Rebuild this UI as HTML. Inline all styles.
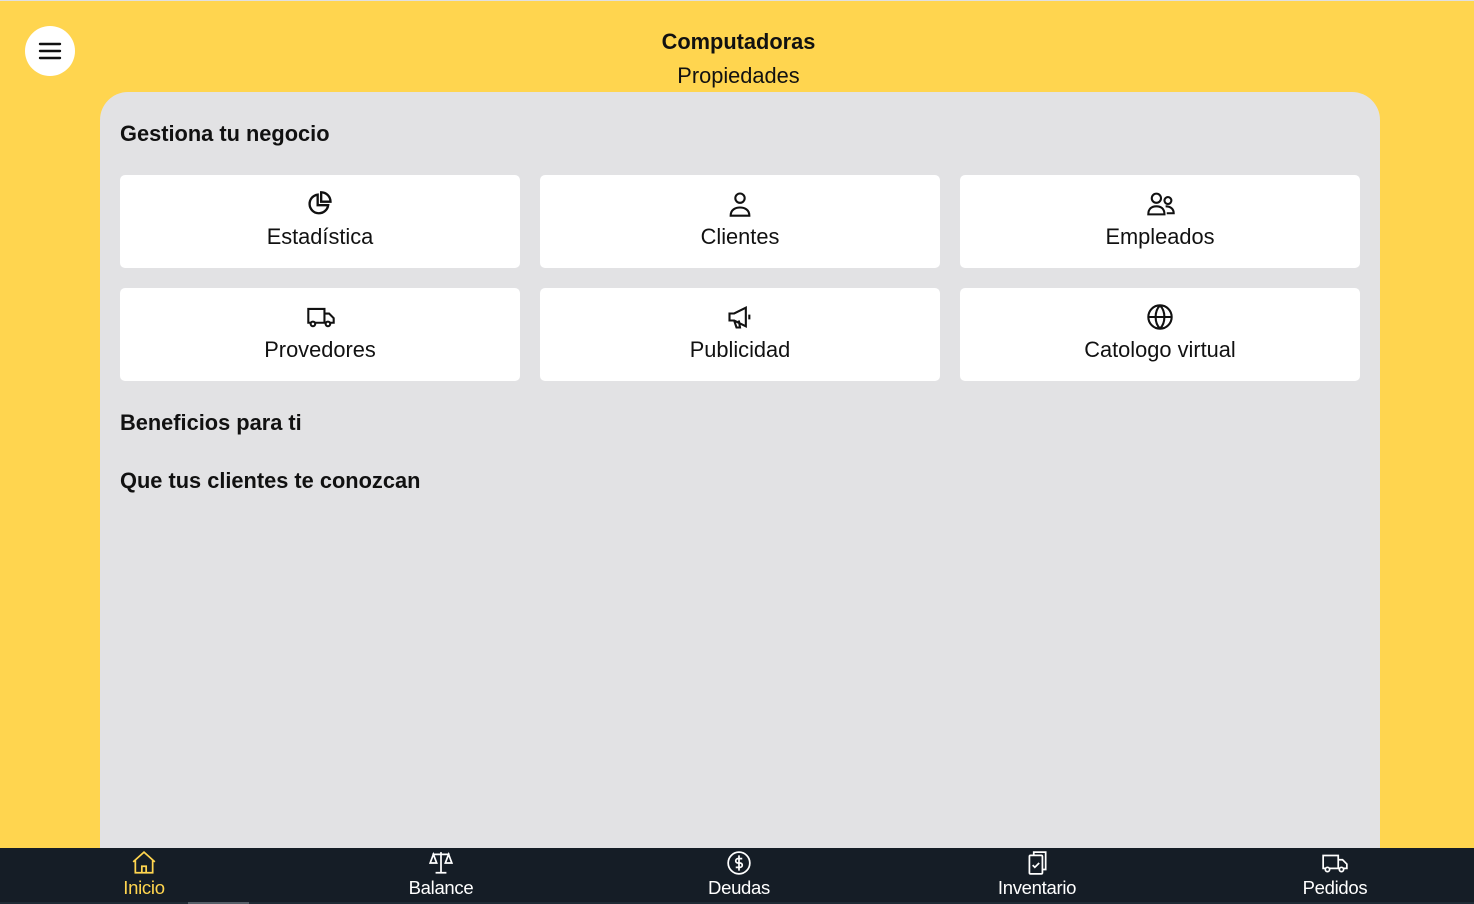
<!DOCTYPE html>
<html><head><meta charset="utf-8"><style>
*{margin:0;padding:0;box-sizing:border-box}
body{width:1474px;height:904px;background:#ffd54f;font-family:"Liberation Sans",Arial,sans-serif;position:relative;overflow:hidden;color:#111}
.top{position:absolute;top:0;left:0;width:1474px;height:1px;background:#e0e0e0}
.menu{position:absolute;left:25px;top:26px;width:50px;height:50px;border-radius:50%;background:#fff;display:flex;align-items:center;justify-content:center}
.t1{position:absolute;top:29px;width:100%;text-align:center;font-weight:bold;font-size:21.8px;padding-left:3px}
.t2{position:absolute;top:63px;width:100%;text-align:center;font-size:21.8px;padding-left:3px}
.panel{position:absolute;left:100px;top:92px;width:1280px;height:760px;background:#e2e2e4;border-radius:28px 28px 0 0}
h2{position:absolute;left:20px;font-size:21.8px;font-weight:bold}
.card{position:absolute;width:400px;height:93px;background:#fff;border-radius:5px;text-align:center;font-size:21.8px}
.card svg{position:absolute;left:186px;top:15px}
.card span{position:absolute;left:0;right:0;top:49px}
.bar{position:absolute;left:0;top:848px;width:1474px;height:56px;background:#151d26}
.tab{position:absolute;top:0;width:200px;text-align:center;color:#fff;font-size:18.5px}
.tab svg{display:block;margin:2px auto 0}
.tab span{display:block;margin-top:1px;letter-spacing:-0.3px}
</style></head><body>
<div class="top"></div>
<div class="menu"><svg width="24" height="20" viewBox="0 0 24 20"><path d="M2 3h20M2 10h20M2 17h20" stroke="#111" stroke-width="2.4" stroke-linecap="round"/></svg></div>
<div class="t1">Computadoras</div>
<div class="t2">Propiedades</div>
<div class="panel">
<h2 style="top:29px">Gestiona tu negocio</h2>
<div class="card" style="left:20px;top:83px"><svg width="28" height="28" viewBox="0 0 24 24" fill="none" stroke="#111" stroke-width="2"><path d="M10 4a8 8 0 1 0 9 9h-9z"/><path d="M13 2a8 8 0 0 1 8 8h-8z"/></svg><span>Estadística</span></div>
<div class="card" style="left:440px;top:83px"><svg width="28" height="28" viewBox="0 0 24 24" fill="none" stroke="#111" stroke-width="1.8"><circle cx="12" cy="7" r="4"/><path d="M4 22c0-5 4-7 8-7s8 2 8 7z"/></svg><span>Clientes</span></div>
<div class="card" style="left:860px;top:83px"><svg width="30" height="28" viewBox="0 0 26 24" fill="none" stroke="#111" stroke-width="1.8"><circle cx="9" cy="7" r="4"/><circle cx="19" cy="9" r="3"/><path d="M2 21c0-5 3-7 7-7s7 2 7 7z"/><path d="M17 14c4 0 7 2 7 6h-6"/></svg><span>Empleados</span></div>
<div class="card" style="left:20px;top:196px"><svg width="30" height="28" viewBox="0 0 26 24" fill="none" stroke="#111" stroke-width="1.8"><path d="M2 5h14v12H2zM16 9h4l4 4v4h-8"/><circle cx="6" cy="18" r="2" fill="#fff"/><circle cx="19" cy="18" r="2" fill="#fff"/></svg><span>Provedores</span></div>
<div class="card" style="left:440px;top:196px"><svg width="28" height="28" viewBox="0 0 24 24" fill="none" stroke="#111" stroke-width="1.8"><path d="M3 9h4l10-5v16L7 15H3zM7 15l2 6h3l-1-6M20 10v4"/></svg><span>Publicidad</span></div>
<div class="card" style="left:860px;top:196px"><svg width="28" height="28" viewBox="0 0 24 24" fill="none" stroke="#111" stroke-width="1.8"><circle cx="12" cy="12" r="10"/><path d="M2 12h20M12 2c-5 5-5 15 0 20M12 2c5 5 5 15 0 20"/></svg><span>Catologo virtual</span></div>
<h2 style="top:318px">Beneficios para ti</h2>
<h2 style="top:376px">Que tus clientes te conozcan</h2>
</div>
<div class="bar">
<div class="tab" style="left:44px;color:#ffd54f"><svg width="28" height="26" viewBox="0 0 24 24" fill="none" stroke="#ffd54f" stroke-width="1.6"><path d="M2 11L12 2l10 9M4 9v12h16V9M10 21v-6h4v6"/></svg><span>Inicio</span></div>
<div class="tab" style="left:341px"><svg width="28" height="26" viewBox="0 0 24 24" fill="none" stroke="#fff" stroke-width="1.6"><path d="M12 2v19M4 4h16M7 21h10M5 4l-3 8h6zM19 4l-3 8h6z"/></svg><span>Balance</span></div>
<div class="tab" style="left:639px"><svg width="28" height="26" viewBox="0 0 24 24" fill="none" stroke="#fff" stroke-width="1.6"><circle cx="12" cy="12" r="10"/><path d="M15 8h-4a2 2 0 0 0 0 4h2a2 2 0 0 1 0 4H9M12 5v14"/></svg><span>Deudas</span></div>
<div class="tab" style="left:937px"><svg width="28" height="26" viewBox="0 0 24 24" fill="none" stroke="#fff" stroke-width="1.6"><rect x="5" y="5" width="12" height="17" rx="1"/><path d="M9 5V2h11v16h-3M8 14l2 2 4-4"/></svg><span>Inventario</span></div>
<div class="tab" style="left:1235px"><svg width="28" height="26" viewBox="0 0 26 24" fill="none" stroke="#fff" stroke-width="1.6"><path d="M2 5h14v12H2zM16 9h4l4 4v4h-8"/><circle cx="6" cy="18" r="2" fill="#151d26"/><circle cx="19" cy="18" r="2" fill="#151d26"/></svg><span>Pedidos</span></div>
<div style="position:absolute;left:0;top:54px;width:1474px;height:2px;background:#1f2b35"></div>
<div style="position:absolute;left:188px;top:54px;width:61px;height:2px;background:#555f68"></div>
</div>
</body></html>
